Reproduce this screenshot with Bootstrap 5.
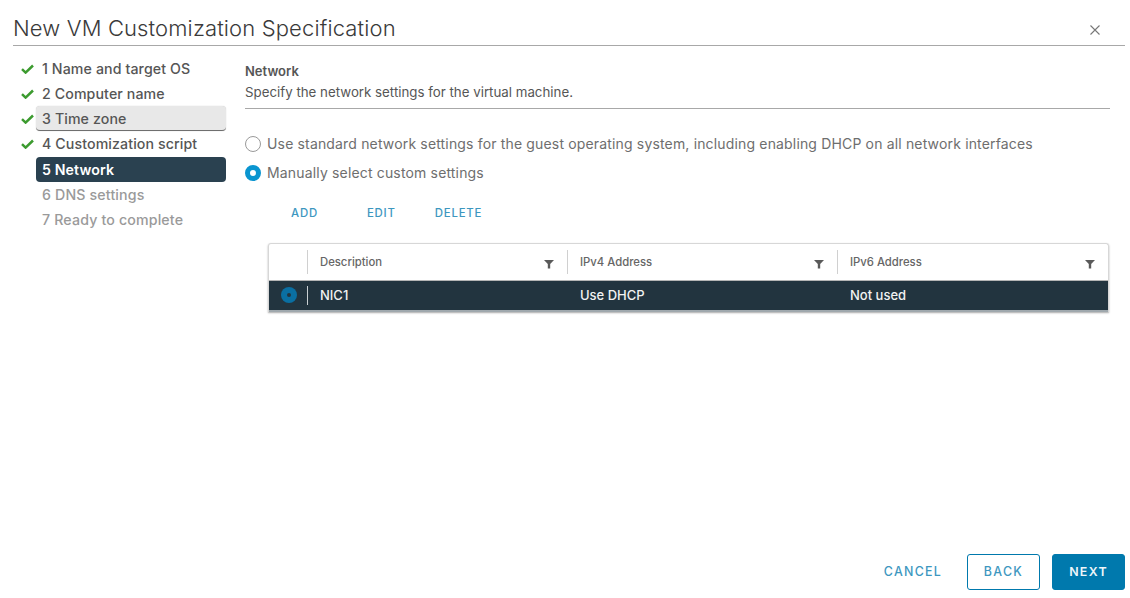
<!DOCTYPE html>
<html lang="en"><head><meta charset="utf-8"><title>New VM Customization Specification</title>
<link href="https://cdn.jsdelivr.net/npm/bootstrap@5.3.0/dist/css/bootstrap.min.css" rel="stylesheet">
<style>
html,body{height:598px;overflow:hidden}
body{background:#fff;font-family:"Inter","Open Sans",sans-serif;color:#565656}
.vm-shell{height:598px;padding:0 5px 8px 13px}
.vm-head{height:46px;border-bottom:1px solid #a8a8a8;padding-top:13px}
.vm-title{font-size:22px;line-height:30px;font-weight:300;color:#3a3a3a;margin:0;letter-spacing:.13px}
.vm-close{width:12px;height:12px;margin:11px 24px 0 0;color:#777}
.vm-side{width:213px;padding:9.8px 0 0 8px}
.vm-step{height:25.2px;font-size:14.2px;line-height:25px;font-weight:500;letter-spacing:.1px;color:#565656;padding-left:20px;position:relative;white-space:nowrap}
.vm-step>span{display:block;margin-left:-5px;padding-left:6px;border-radius:4px;height:25px}
.vm-step svg{position:absolute;left:0;top:8px;width:13px;height:10px}
.vm-hover>span{background:#e8e8e8;border-bottom:1px solid #6f6f6f;box-shadow:0 0 1px #bbb}
.vm-current>span{background:#2a4150;color:#fff;font-weight:600}
.vm-todo{color:#9a9a9a}
.vm-todo>span{letter-spacing:.15px}
.vm-main{width:884px;padding:17px 0 0 19px}
.vm-h{font-size:13px;line-height:16px;font-weight:600;color:#565656}
.vm-sub{font-size:13.3px;line-height:18px;padding-top:4px;border-bottom:1px solid #a8a8a8;box-sizing:content-box;height:18px;padding-bottom:7px;color:#565656}
.vm-radio{height:29px;font-size:14px;letter-spacing:.16px;line-height:29px;color:#6e6e6e;gap:6px}
.vm-dot{width:16px;height:16px;border-radius:50%;border:1px solid #9a9a9a;background:#fff;flex:none}
.vm-on{border:5.5px solid #0a95d0}
.vm-opts{margin-top:20px}
.vm-act{padding:16px 0 0 46px;font-size:11.4px;line-height:20px;font-weight:500;letter-spacing:.8px;color:#3d97bf}
.vm-act span{margin-right:49px}
.vm-act span:nth-child(2){margin-right:39px}
.vm-grid{margin:20px 0 0 23px;width:841px;border:1px solid #d7d7d7;border-radius:3px 3px 0 0;border-bottom:0;box-shadow:0 1px 2px #aaa}
.vm-ghead{height:37px;border-bottom:1px solid #b5b5b5;font-size:11.3px;font-weight:500;color:#666}
.vm-ghead span{padding-top:1px}
.vm-grow{height:31px;background:#22343f;color:#f2f2f2;font-size:13px;font-weight:500;border-bottom:2px solid #9fa8ad}
.vm-c0{width:38px;flex:none;position:relative}
.vm-c{width:270px;flex:none;padding-left:13px;position:relative;display:flex;align-items:center;justify-content:space-between;padding-right:13px}
.vm-first{width:260px}
.vm-c:last-child{width:271px}
.vm-ghead .vm-c::before{content:"";position:absolute;left:0;top:6px;bottom:6px;width:1px;background:#d0d0d0}
.vm-grow .vm-first::before{content:"";position:absolute;left:0;top:5px;bottom:5px;width:1px;background:#c9cfd2}
.vm-c svg{width:10px;height:10px;margin-top:3px}
.vm-rowdot{position:absolute;left:12px;top:6px;width:16px;height:16px;border-radius:50%;background:#0a6fa2;display:flex;align-items:center;justify-content:center}
.vm-rowdot::after{content:"";width:4px;height:4px;border-radius:50%;background:#22343f}
.vm-foot{gap:12px;align-items:center}
.vm-btn{height:36px;border-radius:3px;font-size:12.4px;font-weight:500;letter-spacing:1.3px;padding:0;display:flex;align-items:center;justify-content:center;border:1px solid transparent}
.vm-cancel{width:74px;color:#3d97bf;background:none;margin-right:5px}
.vm-back{width:73px;color:#3d97bf;background:#fff;border-color:#0079ad}
.vm-next{width:73px;color:#eef6fa;background:#0079ad;border-color:#0079ad;font-weight:600}
</style></head>
<body>
<div class="vm-shell d-flex flex-column">
  <div class="vm-head d-flex justify-content-between">
    <h1 class="vm-title">New VM Customization Specification</h1>
    <svg class="vm-close" viewBox="0 0 12 12"><path d="M1.5 1.5l9 9M10.5 1.5l-9 9" stroke="currentColor" stroke-width="1.1" fill="none"/></svg>
  </div>
  <div class="d-flex flex-grow-1">
    <nav class="vm-side">
      <div class="vm-step"><svg viewBox="0 0 13 10"><path d="M1 5.2l3.6 3.4L12 1.5" fill="none" stroke="#3c9b2f" stroke-width="2.5"/></svg><span>1 Name and target OS</span></div>
      <div class="vm-step"><svg viewBox="0 0 13 10"><path d="M1 5.2l3.6 3.4L12 1.5" fill="none" stroke="#3c9b2f" stroke-width="2.5"/></svg><span>2 Computer name</span></div>
      <div class="vm-step vm-hover"><svg viewBox="0 0 13 10"><path d="M1 5.2l3.6 3.4L12 1.5" fill="none" stroke="#3c9b2f" stroke-width="2.5"/></svg><span>3 Time zone</span></div>
      <div class="vm-step"><svg viewBox="0 0 13 10"><path d="M1 5.2l3.6 3.4L12 1.5" fill="none" stroke="#3c9b2f" stroke-width="2.5"/></svg><span>4 Customization script</span></div>
      <div class="vm-step vm-current"><span>5 Network</span></div>
      <div class="vm-step vm-todo"><span>6 DNS settings</span></div>
      <div class="vm-step vm-todo"><span>7 Ready to complete</span></div>
    </nav>
    <main class="vm-main">
      <div class="vm-h">Network</div>
      <div class="vm-sub">Specify the network settings for the virtual machine.</div>
      <div class="vm-opts">
        <div class="vm-radio d-flex align-items-center"><span class="vm-dot"></span>Use standard network settings for the guest operating system, including enabling DHCP on all network interfaces</div>
        <div class="vm-radio d-flex align-items-center"><span class="vm-dot vm-on"></span>Manually select custom settings</div>
      </div>
      <div class="vm-act d-flex"><span>ADD</span><span>EDIT</span><span>DELETE</span></div>
      <div class="vm-grid">
        <div class="vm-ghead d-flex">
          <div class="vm-c0"></div>
          <div class="vm-c vm-first"><span>Description</span><svg viewBox="0 0 10 10"><path d="M0 1h10L6.2 5v4.5H3.8V5z" fill="#5a5a5a"/></svg></div>
          <div class="vm-c"><span>IPv4 Address</span><svg viewBox="0 0 10 10"><path d="M0 1h10L6.2 5v4.5H3.8V5z" fill="#5a5a5a"/></svg></div>
          <div class="vm-c"><span>IPv6 Address</span><svg viewBox="0 0 10 10"><path d="M0 1h10L6.2 5v4.5H3.8V5z" fill="#5a5a5a"/></svg></div>
        </div>
        <div class="vm-grow d-flex">
          <div class="vm-c0"><span class="vm-rowdot"></span></div>
          <div class="vm-c vm-first"><span>NIC1</span></div>
          <div class="vm-c"><span>Use DHCP</span></div>
          <div class="vm-c"><span>Not used</span></div>
        </div>
      </div>
    </main>
  </div>
  <div class="vm-foot d-flex justify-content-end">
    <button type="button" class="btn vm-btn vm-cancel">CANCEL</button>
    <button type="button" class="btn vm-btn vm-back">BACK</button>
    <button type="button" class="btn vm-btn vm-next">NEXT</button>
  </div>
</div>
</body></html>
